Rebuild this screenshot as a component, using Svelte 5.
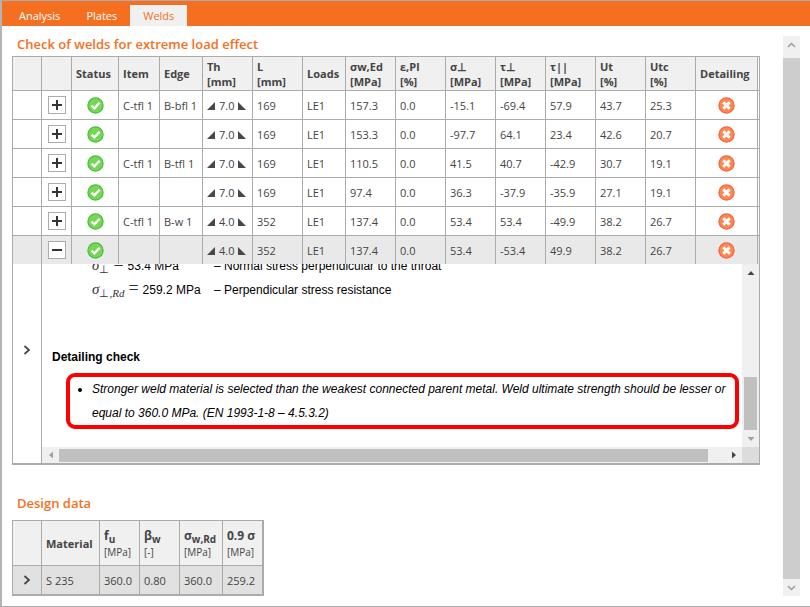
<script>
  const tabs = ['Analysis', 'Plates', 'Welds'];
  let active = $state('Welds');

  const columns = [
    ['Status'], ['Item'], ['Edge'], ['Th', '[mm]'], ['L', '[mm]'], ['Loads'],
    ['σw,Ed', '[MPa]'], ['ε,Pl', '[%]'], ['σ⊥', '[MPa]'], ['τ⊥', '[MPa]'],
    ['τ||', '[MPa]'], ['Ut', '[%]'], ['Utc', '[%]'], ['Detailing']
  ];

  const welds = [
    { item: 'C-tfl 1', edge: 'B-bfl 1', th: '7.0', values: ['169', 'LE1', '157.3', '0.0', '-15.1', '-69.4', '57.9', '43.7', '25.3'] },
    { item: '', edge: '', th: '7.0', values: ['169', 'LE1', '153.3', '0.0', '-97.7', '64.1', '23.4', '42.6', '20.7'] },
    { item: 'C-tfl 1', edge: 'B-tfl 1', th: '7.0', values: ['169', 'LE1', '110.5', '0.0', '41.5', '40.7', '-42.9', '30.7', '19.1'] },
    { item: '', edge: '', th: '7.0', values: ['169', 'LE1', '97.4', '0.0', '36.3', '-37.9', '-35.9', '27.1', '19.1'] },
    { item: 'C-tfl 1', edge: 'B-w 1', th: '4.0', values: ['352', 'LE1', '137.4', '0.0', '53.4', '53.4', '-49.9', '38.2', '26.7'] },
    { item: '', edge: '', th: '4.0', values: ['352', 'LE1', '137.4', '0.0', '53.4', '-53.4', '49.9', '38.2', '26.7'], open: true }
  ];

  const design = [
    { name: 'f', sub: 'u', unit: '[MPa]', value: '360.0' },
    { name: 'β', sub: 'w', unit: '[-]', value: '0.80' },
    { name: 'σ', sub: 'w,Rd', unit: '[MPa]', value: '360.0' },
    { name: '0.9 σ', sub: '', unit: '[MPa]', value: '259.2' }
  ];
</script>

{#snippet chevron()}
  <svg class="chevron" width="8" height="10" viewBox="0 0 8 10" aria-hidden="true">
    <path d="M1.5 1 L6 5 L1.5 9" fill="none" stroke="#444" stroke-width="1.7" />
  </svg>
{/snippet}

{#snippet arrow(points, color)}
  <svg width="8" height="8" viewBox="0 0 8 8" aria-hidden="true">
    <polygon {points} fill={color} />
  </svg>
{/snippet}

<div class="window">
  <nav class="tabs">
    {#each tabs as tab}
      <button class="tab" class:active={tab === active} onclick={() => (active = tab)}>{tab}</button>
    {/each}
  </nav>

  <div class="body">
    <main>
      <h2>Check of welds for extreme load effect</h2>
      <table class="welds">
        <colgroup>
          <col class="w29" /><col class="w30" /><col class="w47" /><col class="w41" /><col class="w43" />
          <col class="w50" /><col class="w50" /><col class="w43" />
          {#each Array(7) as _}<col class="w50" />{/each}
          <col class="w62" /><col class="w1" />
        </colgroup>
        <thead>
          <tr>
            <th></th>
            <th></th>
            {#each columns as lines}
              <th>{#each lines as line}<span class="line">{line}</span>{/each}</th>
            {/each}
            <td class="edge"></td>
          </tr>
        </thead>
        <tbody>
          {#each welds as weld}
            <tr class:open={weld.open}>
              <td></td>
              <td class="center">
                <button class="toggle" aria-label={weld.open ? 'Collapse' : 'Expand'}>
                  <svg width="16" height="16" viewBox="0 0 16 16">
                    <path d={weld.open ? 'M3 8H13' : 'M3 8H13M8 3V13'} stroke="#333" stroke-width="2" />
                  </svg>
                </button>
              </td>
              <td class="center">
                <svg class="mark" width="17" height="17" viewBox="0 0 17 17" role="img" aria-label="OK">
                  <circle cx="8.5" cy="8.5" r="7.6" fill="#76d655" stroke="#45bd3c" stroke-width="1.2" />
                  <path d="M4.5 8.6 L7.4 11.3 L12.6 5.8" fill="none" stroke="#fff" stroke-width="2.4" />
                </svg>
              </td>
              <td>{weld.item}</td>
              <td>{weld.edge}</td>
              <td>
                <div class="throat">
                  {@render arrow('0,8 8,8 8,0', '#484848')}
                  <span>{weld.th}</span>
                  {@render arrow('0,0 0,8 8,8', '#484848')}
                </div>
              </td>
              {#each weld.values as value}<td>{value}</td>{/each}
              <td class="center">
                <svg class="mark" width="17" height="17" viewBox="0 0 17 17" role="img" aria-label="Failed">
                  <circle cx="8.5" cy="8.5" r="7.6" fill="#ff8650" stroke="#f0653c" stroke-width="1.2" />
                  <path d="M5.3 5.3 L11.7 11.7 M11.7 5.3 L5.3 11.7" stroke="#fff" stroke-width="3" />
                </svg>
              </td>
              <td class="edge"></td>
            </tr>
          {/each}
          <tr class="detail">
            <td class="center marker">{@render chevron()}</td>
            <td class="pane-cell" colspan="16">
              <div class="pane">
                <div class="view">
                  <dl>
                    <dt><i class="math">σ<sub>⊥</sub></i><span class="eq">=</span>53.4 MPa</dt>
                    <dd>– Normal stress perpendicular to the throat</dd>
                    <dt><i class="math">σ<sub>⊥,<em>Rd</em></sub></i><span class="eq">=</span>259.2 MPa</dt>
                    <dd>– Perpendicular stress resistance</dd>
                  </dl>
                  <h3>Detailing check</h3>
                  <div class="notice">
                    <ul>
                      <li>Stronger weld material is selected than the weakest connected parent metal. Weld ultimate strength should be lesser or equal to 360.0 MPa. (EN 1993-1-8 – 4.5.3.2)</li>
                    </ul>
                  </div>
                </div>
                <div class="bar vertical">
                  <button aria-label="Scroll up">{@render arrow('0.5,6 4,2 7.5,6', '#444')}</button>
                  <div class="track"><div class="thumb"></div></div>
                  <button aria-label="Scroll down">{@render arrow('0.5,2 4,6 7.5,2', '#a0a0a0')}</button>
                </div>
                <div class="bar horizontal">
                  <button aria-label="Scroll left">{@render arrow('6,0.5 2,4 6,7.5', '#a0a0a0')}</button>
                  <div class="track"><div class="thumb"></div></div>
                  <button aria-label="Scroll right">{@render arrow('2,0.5 6,4 2,7.5', '#444')}</button>
                </div>
                <div class="corner"></div>
              </div>
            </td>
          </tr>
        </tbody>
      </table>

      <h2 class="second">Design data</h2>
      <table class="design">
        <colgroup>
          <col class="w29" /><col class="w58" /><col class="w40" /><col class="w40" /><col class="w43" /><col class="w40" />
        </colgroup>
        <thead>
          <tr>
            <th></th>
            <th>Material</th>
            {#each design as d}
              <th>
                <span class="symbol">{d.name}{#if d.sub}<sub>{d.sub}</sub>{/if}</span>
                <span class="unit">{d.unit}</span>
              </th>
            {/each}
          </tr>
        </thead>
        <tbody>
          <tr>
            <td class="center">{@render chevron()}</td>
            <td>S 235</td>
            {#each design as d}<td>{d.value}</td>{/each}
          </tr>
        </tbody>
      </table>
    </main>

    <div class="page-bar">
      <button aria-label="Page up">
        <svg width="9" height="6" viewBox="0 0 9 6"><path d="M1 5L4.5 1.5L8 5" fill="none" stroke="#999" stroke-width="1.4" /></svg>
      </button>
      <div class="page-thumb"></div>
      <button aria-label="Page down">
        <svg width="9" height="6" viewBox="0 0 9 6"><path d="M1 1L4.5 4.5L8 1" fill="none" stroke="#999" stroke-width="1.4" /></svg>
      </button>
    </div>
  </div>
</div>

<style>
  :global(body) { margin: 0; background: #fff; }

  .window {
    box-sizing: border-box;
    min-height: 100vh;
    display: flex;
    flex-direction: column;
    border: 1px solid #ababab;
    border-left: 2px solid #b4b4b4;
    border-right: 0;
    font-family: "Open Sans", "Noto Sans", sans-serif;
    font-size: 11px;
    color: #444;
  }

  button {
    padding: 0;
    border: 0;
    background: none;
    font: inherit;
    color: inherit;
    display: flex;
    align-items: center;
    justify-content: center;
  }

  .tabs {
    display: flex;
    align-items: flex-end;
    height: 25px;
    padding-left: 4px;
    background: #f56f21;
  }
  .tab {
    height: 21px;
    padding: 0 13px;
    color: #fff;
  }
  .tab.active { background: #f0f0f0; color: #f56f21; }

  .body { flex: 1; display: flex; }
  main { flex: 1; min-width: 0; padding: 10px 0 10px 10px; }

  h2 {
    margin: 0 0 4px 5px;
    font-size: 13px;
    line-height: 16px;
    font-weight: 600;
    color: #f56f21;
  }
  h2.second { margin-top: 30px; margin-bottom: 9px; }

  table {
    table-layout: fixed;
    border-collapse: separate;
    border-spacing: 0;
    border: 1px solid #ababab;
  }
  .welds { width: 748px; border-bottom-width: 2px; }
  .design { width: 252px; border-bottom-width: 2px; }
  .w1 { width: 1px; }
  .w29 { width: 29px; }
  .w30 { width: 30px; }
  .w40 { width: 40px; }
  .w41 { width: 41px; }
  .w43 { width: 43px; }
  .w47 { width: 47px; }
  .w50 { width: 50px; }
  .w58 { width: 58px; }
  .w62 { width: 62px; }

  th, td {
    box-sizing: border-box;
    height: 29px;
    padding: 0 0 0 4px;
    border-right: 1px solid #ababab;
    border-bottom: 1px solid #ababab;
    text-align: left;
    vertical-align: middle;
    white-space: nowrap;
    line-height: 15px;
  }
  th { height: 34px; background: #f0f0f0; font-weight: 700; }
  .line { display: block; }
  .center { padding: 0; text-align: center; }
  .center svg { display: block; margin: 0 auto; }
  .edge { padding: 0; border-right: 0; }
  .open td { height: 28px; background: #e9e9e9; border-bottom: 0; }

  .toggle {
    width: 18px;
    height: 18px;
    margin: 0 auto;
    border: 1px solid #ababab;
    background: #fff;
  }
  .throat { display: flex; align-items: baseline; gap: 4px; }

  .detail td { height: auto; border-bottom: 0; }
  .detail .marker { padding-bottom: 28px; }
  .detail .pane-cell { padding: 0; border-right: 0; }
  .pane {
    display: grid;
    grid-template: 183px 16px / 1fr 17px;
    font-family: "Liberation Sans", Arial, sans-serif;
    font-size: 12px;
    line-height: 24px;
    color: #000;
  }
  .view {
    display: flex;
    flex-direction: column;
    justify-content: flex-end;
    overflow: hidden;
    padding: 0 3px 18px 10px;
    white-space: normal;
  }
  dl {
    display: grid;
    grid-template-columns: 122px 1fr;
    margin: 0 0 43px 40px;
  }
  dt, dd { margin: 0; height: 24px; white-space: nowrap; }
  .math { font-family: "Liberation Serif", serif; font-size: 15px; line-height: 20px; color: #333; }
  .math sub { font-size: 11px; line-height: 0; vertical-align: -3px; font-style: normal; }
  .eq { margin: 0 4px; font-family: "Liberation Serif", serif; font-size: 18px; line-height: 0; color: #333; }
  h3 { margin: 0 0 4px; font-size: 12px; line-height: 24px; }
  .notice {
    margin-left: 14px;
    border: 4px solid #f00;
    border-radius: 9px;
  }
  ul { margin: 0; padding: 0 0 0 22px; font-style: italic; }

  .bar { display: flex; background: #f0f0f0; }
  .bar button { flex: none; width: 17px; height: 17px; }
  .track { flex: 1; display: flex; justify-content: flex-end; }
  .thumb { background: #c0c0c0; }
  .vertical { flex-direction: column; }
  .vertical .track { flex-direction: column; padding: 0 2px; }
  .vertical .thumb { height: 53px; }
  .horizontal button { height: 16px; }
  .horizontal .track { justify-content: flex-start; padding: 2px 0 1px; }
  .horizontal .thumb { width: 97.5%; }
  .corner { background: #dcdcdc; }

  .design th { height: 45px; }
  .design td { height: 28px; background: #e1e1e1; border-bottom: 0; }
  .symbol { display: block; font-size: 12px; line-height: 18px; }
  .symbol sub { font-size: 10px; line-height: 0; vertical-align: -3px; }
  .unit { display: block; font-size: 10px; line-height: 15px; font-weight: 400; }

  .page-bar {
    flex: none;
    display: flex;
    flex-direction: column;
    width: 17px;
    margin: 10px 10px 10px 0;
    background: #f0f0f0;
  }
  .page-bar button { height: 17px; }
  .page-thumb { flex: 1; margin-top: 5px; background: #cdcdcd; }
</style>
